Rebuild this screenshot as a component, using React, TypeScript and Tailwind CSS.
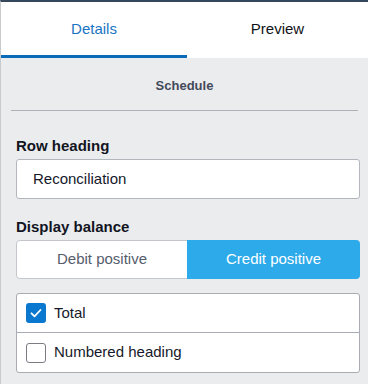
import { useState } from "react";

function CheckRow({ label, checked, last }: { label: string; checked: boolean; last?: boolean }) {
  return (
    <div className={`flex h-[39px] items-center gap-2 px-[9px] ${last ? "" : "border-b border-[#a9acb2]"}`}>
      {checked ? (
        <span className="flex h-5 w-5 items-center justify-center rounded-[3px] bg-[#0b78cf]">
          <svg width="14" height="14" viewBox="0 0 14 14" fill="none">
            <path d="M2.5 7.3l3 3 6-6.3" stroke="white" strokeWidth="1.8" strokeLinecap="round" strokeLinejoin="round" />
          </svg>
        </span>
      ) : (
        <span className="h-5 w-5 rounded-[3px] border border-[#7a7d84] bg-white" />
      )}
      <span className="text-[15px] text-[#15192a]">{label}</span>
    </div>
  );
}

export default function App() {
  const [tab] = useState("details");

  return (
    <div
      className="flex h-[384px] w-[368px] flex-col overflow-hidden border-t-2 border-l border-t-[#35475a] border-l-[#c9cace] bg-[#ebecee]"
      style={{ fontFamily: '"Liberation Sans", Arial, sans-serif' }}
    >
      {/* Tabs */}
      <div className="flex h-14 bg-white">
        <div
          className={`flex w-[186px] items-center justify-center border-b-[3px] pt-[2px] text-[15px] ${
            tab === "details" ? "border-[#0a6bb8] text-[#1a74c4]" : "border-transparent"
          }`}
        >
          Details
        </div>
        <div className="flex flex-1 items-center justify-center border-b-[3px] border-transparent pt-[2px] text-[15px] text-[#111318]">
          Preview
        </div>
      </div>

      {/* Section title */}
      <div className="pt-[20px] text-center text-[13px] leading-4 font-bold text-[#434a5a]">Schedule</div>
      <div className="mx-[10px] mt-4 h-px bg-[#aeb1b7]" />

      <div className="flex w-[359px] flex-col pl-[15px]">
        <label className="mt-[25px] text-[15px] leading-5 font-bold text-[#12151f]">Row heading</label>
        <div className="mt-[3px] flex h-10 items-center rounded-[3px] border border-[#b3b6bc] bg-white px-4 text-[15px] text-[#15192a]">
          Reconciliation
        </div>

        <label className="mt-[18px] text-[15px] leading-5 font-bold text-[#12151f]">Display balance</label>
        <div className="mt-[3px] flex h-[39px] overflow-hidden rounded-[4px] text-[15px]">
          <div className="flex w-[171px] items-center justify-center rounded-l-[4px] border border-r-0 border-[#c3c6cb] bg-white text-[#565d6b]">
            Debit positive
          </div>
          <div className="flex flex-1 items-center justify-center bg-[#2daaea] text-white">Credit positive</div>
        </div>

        <div className="mt-[14px] rounded-[3px] border border-[#a9acb2] bg-white">
          <CheckRow label="Total" checked />
          <CheckRow label="Numbered heading" checked={false} last />
        </div>
      </div>
    </div>
  );
}
